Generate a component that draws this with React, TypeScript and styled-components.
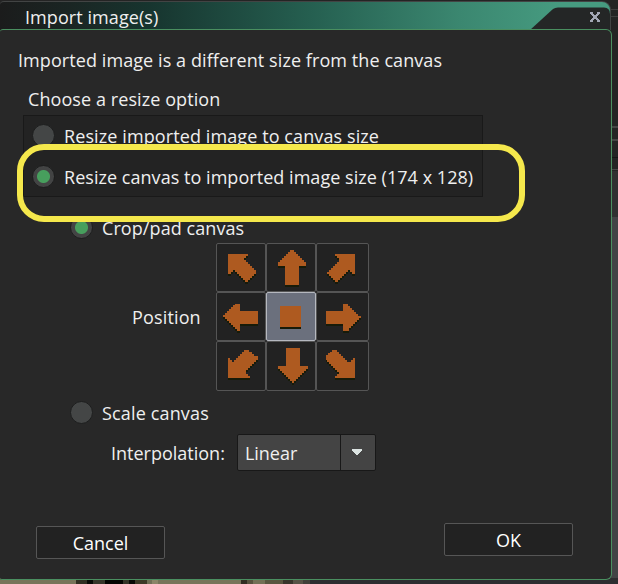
import React, { useState } from "react";
import styled, { createGlobalStyle } from "styled-components";

const GlobalStyle = createGlobalStyle`
  * { box-sizing: border-box; }
  body { margin: 0; background: #242424; overflow: hidden; }
  button { font: inherit; color: inherit; padding: 0; margin: 0; }
`;

const Screen = styled.div`
  position: relative;
  width: 618px;
  height: 584px;
  overflow: hidden;
  padding-top: 1px;
  background: #242424;
  color: #efefef;
  font: 18px/26px "Open Sans", "Noto Sans", sans-serif;
  white-space: nowrap;
`;

const Backdrop = styled.svg`
  position: absolute;
  inset: 0;
`;

const Dialog = styled.section`
  position: relative;
  width: 612px;
  height: 579px;
  display: flex;
  flex-direction: column;
`;

const TitleBar = styled.header`
  position: relative;
  flex: none;
  height: 29px;
  width: 611px;
  display: flex;
  justify-content: space-between;
  align-items: center;
  padding: 2px 10px 1px 25px;
  border: 1px solid #424444;
  border-width: 1px 1px 0 0;
  border-radius: 4px 9px 0 0;
  overflow: hidden;
  background: linear-gradient(90deg, #1b1c1c 0, #1a2523 70px, #17352f 150px, #255f50 310px, #3b8770 460px, #469b80 560px);
`;

const TitleCorner = styled.svg`
  position: absolute;
  right: 0;
  top: 0;
`;

const Title = styled.h1<{ $track: number }>`
  margin: 0;
  font: inherit;
  letter-spacing: ${(p) => p.$track}px;
`;

const CloseButton = styled.button`
  position: relative;
  width: 10px;
  height: 10px;
  border: 0;
  background: none;
  display: flex;
`;

const Body = styled.div`
  position: relative;
  flex: 1;
  margin-top: -1px;
  padding: 1px 1px 1px 0;
  border: 1px solid #4a8f60;
  border-left: 0;
  border-radius: 3px 6px 6px 2px;
  background: #282828;
  display: flex;
  flex-direction: column;
`;

const Text = styled.span<{ $track?: number }>`
  letter-spacing: ${(p) => p.$track ?? 0}px;
`;

const Message = styled.div`
  margin: 16px 0 0 18px;
`;

const Prompt = styled.div`
  margin: 13px 0 0 28px;
`;

const OptionGroup = styled.div`
  width: 460px;
  height: 82px;
  margin: 3px 0 0 23px;
  border: 1px solid #191919;
  background: #232323;
  padding: 0 0 0 8px;
  display: flex;
  flex-direction: column;
`;

const Option = styled.button<{ $height: number }>`
  flex: none;
  height: ${(p) => p.$height}px;
  border: 0;
  background: none;
  display: flex;
  align-items: center;
  gap: 9px;
  text-align: left;
`;

const Radio = styled.i<{ $on: boolean }>`
  flex: none;
  width: 23px;
  height: 23px;
  margin-top: -1px;
  border-radius: 50%;
  border: 1px solid #1d1e1e;
  background: ${(p) => (p.$on ? "radial-gradient(circle, #479f5d 0 6px, #434444 7px)" : "#444646")};
`;

const CanvasOptions = styled.div`
  display: flex;
  flex-direction: column;
  align-items: flex-start;
  padding: 16px 0 0 70px;
`;

const PositionRow = styled.div`
  display: flex;
  align-items: center;
  gap: 15px;
  margin: 1px 0 0 62px;
`;

const AnchorGrid = styled.div`
  display: grid;
  grid-template-columns: 50px 50px 53px;
  grid-template-rows: 49px 49px 50px;
`;

const AnchorCell = styled.button<{ $on: boolean }>`
  border: 1px solid ${(p) => (p.$on ? "#b5b8bf" : "#555")};
  border-radius: 2px;
  background: ${(p) => (p.$on ? "#6b707d" : "#222")};
  overflow: hidden;
  display: flex;
  svg { flex: none; margin: -1px 0 0 0; }
`;

const InterpolationRow = styled.div`
  display: flex;
  align-items: center;
  gap: 12px;
  margin: 0 0 0 41px;
`;

const Select = styled.button`
  width: 139px;
  height: 37px;
  border: 1px solid #181818;
  border-radius: 2px;
  background: #444;
  display: flex;
  align-items: stretch;
  text-align: left;
`;

const SelectValue = styled.span`
  flex: 1;
  display: flex;
  align-items: center;
  padding: 1px 0 0 7px;
`;

const SelectArrow = styled.span`
  width: 35px;
  border-left: 1px solid #181818;
  display: grid;
  place-items: center;
  padding: 0 2px 1px 0;
`;

const Footer = styled.footer`
  margin-top: auto;
  display: flex;
  justify-content: space-between;
  align-items: flex-start;
  padding: 0 37px 19px 36px;
`;

const ActionButton = styled.button<{ $drop?: number }>`
  width: 129px;
  height: 33px;
  margin-top: ${(p) => p.$drop ?? 0}px;
  border: 1px solid #565656;
  border-radius: 2px;
  background: #222;
  color: #fff;
`;

const Highlight = styled.div`
  position: absolute;
  left: 17px;
  top: 144px;
  width: 508px;
  height: 78px;
  border: 6px solid #f5e84c;
  border-radius: 27px;
  pointer-events: none;
`;

const anchors = [
  "34,34 94,34 94,40 88,40 88,46 82,46 82,52 88,52 88,58 94,58 94,64 100,64 100,70 106,70 106,76 112,76 112,82 118,82 118,92 112,92 112,98 106,98 106,104 100,104 100,110 94,110 94,118 84,118 84,112 78,112 78,106 72,106 72,100 66,100 66,94 60,94 60,88 54,88 54,82 48,82 48,88 42,88 42,94 34,94",
  "70,26 70,20 82,20 82,26 88,26 88,32 94,32 94,38 100,38 100,44 106,44 106,50 112,50 112,56 118,56 118,70 96,70 96,127 54,127 54,70 34,70 34,56 40,56 40,50 46,50 46,44 52,44 52,38 58,38 58,32 64,32 64,26",
  "54,34 115,34 115,94 106,94 106,88 100,88 100,82 94,82 94,88 88,88 88,94 82,94 82,100 76,100 76,106 70,106 70,112 64,112 64,118 54,118 54,112 48,112 48,106 42,106 42,100 36,100 36,94 30,94 30,86 36,86 36,80 42,80 42,74 48,74 48,68 54,68 54,62 60,62 60,56 66,56 66,46 60,46 60,40 54,40",
  "18,70 24,70 24,64 30,64 30,58 36,58 36,52 42,52 42,46 48,46 48,40 54,40 54,36 70,36 70,58 124,58 124,96 70,96 70,117 60,117 60,111 54,111 54,105 48,105 48,99 42,99 42,93 36,93 36,87 30,87 30,81 24,81 24,76 18,76",
  "40,42 103,42 103,104 40,104",
  "26,58 78,58 78,36 92,36 92,42 98,42 98,48 104,48 104,54 110,54 110,60 116,60 116,66 122,66 122,72 131,72 131,78 125,78 125,84 119,84 119,90 113,90 113,96 107,96 107,102 101,102 101,108 95,108 95,117 78,117 78,96 26,96",
  "34,50 40,50 40,56 46,56 46,62 52,62 52,56 58,56 58,50 64,50 64,44 70,44 70,38 76,38 76,32 82,32 82,26 96,26 96,32 106,32 106,38 112,38 112,44 122,44 122,56 116,56 116,62 110,62 110,68 104,68 104,74 98,74 98,80 92,80 92,86 86,86 86,98 92,98 92,104 98,104 98,112 34,112",
  "58,20 98,20 98,76 122,76 122,84 116,84 116,90 110,90 110,96 104,96 104,102 98,102 98,108 92,108 92,114 86,114 86,120 80,120 80,127 74,127 74,120 68,120 68,114 62,114 62,108 56,108 56,102 50,102 50,96 44,96 44,90 38,90 38,84 34,84 34,76 58,76",
  "28,42 34,42 34,36 40,36 40,32 46,32 46,26 60,26 60,32 66,32 66,38 72,38 72,44 78,44 78,50 84,50 84,56 90,56 90,62 102,62 102,56 108,56 108,50 115,50 115,112 54,112 54,106 60,106 60,100 66,100 66,92 60,92 60,86 54,86 54,80 48,80 48,74 42,74 42,68 36,68 36,62 30,62 30,56 28,56",
];

const AnchorIcon = ({ points }: { points: string }) => (
  <svg width="50" height="49" viewBox="0 0 150 147" shapeRendering="crispEdges">
    <polygon points={points} transform="translate(0 6)" fill="#171b09" />
    <polygon points={points} fill="#ae5a20" />
  </svg>
);

const floor: [number, number, string][] = [
  [0, 76, "#77745a"], [76, 11, "#302f22"], [87, 6, "#080a06"], [93, 12, "#36362a"],
  [105, 18, "#040502"], [123, 6, "#343427"], [129, 6, "#080a06"], [135, 12, "#3c3a27"],
  [147, 5, "#706f56"], [152, 6, "#8a8568"], [158, 83, "#77745a"], [241, 6, "#302d21"],
  [247, 6, "#57523e"], [253, 12, "#737056"], [265, 18, "#595640"], [283, 10, "#38352b"],
  [293, 10, "#575346"], [303, 7, "#414039"], [310, 308, "#2d2d30"],
];

export default function App() {
  const [mode, setMode] = useState("canvas");
  const [fit, setFit] = useState("crop");
  const [anchor, setAnchor] = useState(4);
  return (
    <Screen>
      <GlobalStyle />
      <Backdrop width="618" height="584" shapeRendering="crispEdges">
        <path d="M611 9h7M611 16h7" stroke="#3e3e3e" />
        <path d="M611 127h7M611 140h7" stroke="#444" strokeWidth="2" />
        <path d="M611 157h7" stroke="#151515" />
        <path d="M611 169.500h7" stroke="#484848" />
        <path d="M611 171h7v46h-7z" fill="#303030" />
        <path d="M605 217h13v367h-13z" fill="#424345" />
        {floor.map(([x, w, fill]) => (
          <rect key={x} x={x} y="578" width={w} height="6" fill={fill} />
        ))}
      </Backdrop>
      <Dialog>
        <TitleBar>
          <TitleCorner width="80" height="28" viewBox="0 0 80 28">
            <path d="M0 28 23 7Q25 5.500 28 5.500H74Q80 5.500 80 12V28Z" fill="#242626" />
          </TitleCorner>
          <Title $track={0.07}>Import image(s)</Title>
          <CloseButton aria-label="Close">
            <svg width="10" height="10" viewBox="0 0 10 10" shapeRendering="crispEdges">
              <path d="M0 0h3v2h1v1h2V2h1V0h3v2H9v1H8v1H7v2h1v1h1v1h1v2H7V8H6V7H4v1H3v2H0V8h1V7h1V6h1V4H2V3H1V2H0z" fill="#a2a7b5" />
            </svg>
          </CloseButton>
        </TitleBar>
        <Body>
          <Message><Text $track={0.08}>Imported image is a different size from the canvas</Text></Message>
          <Prompt><Text $track={0.08}>Choose a resize option</Text></Prompt>
          <OptionGroup>
            <Option $height={40} onClick={() => setMode("image")}>
              <Radio $on={mode === "image"} /><Text $track={0.1}>Resize imported image to canvas size</Text>
            </Option>
            <Option $height={42} onClick={() => setMode("canvas")}>
              <Radio $on={mode === "canvas"} /><Text $track={0.04}>Resize canvas to imported image size (174 x 128)</Text>
            </Option>
          </OptionGroup>
          <CanvasOptions>
            <Option $height={29} onClick={() => setFit("crop")}>
              <Radio $on={fit === "crop"} /><Text $track={0.08}>Crop/pad canvas</Text>
            </Option>
            <PositionRow>
              <Text $track={0.15}>Position</Text>
              <AnchorGrid>
                {anchors.map((points, i) => (
                  <AnchorCell key={i} $on={anchor === i} onClick={() => setAnchor(i)}>
                    <AnchorIcon points={points} />
                  </AnchorCell>
                ))}
              </AnchorGrid>
            </PositionRow>
            <Option $height={43} onClick={() => setFit("scale")}>
              <Radio $on={fit === "scale"} /><Text $track={0.15}>Scale canvas</Text>
            </Option>
            <InterpolationRow>
              <Text>Interpolation:</Text>
              <Select>
                <SelectValue>Linear</SelectValue>
                <SelectArrow>
                  <svg width="10" height="7" viewBox="0 0 10 7" shapeRendering="crispEdges">
                    <path d="M0 0h10v2H9v1H8v1H7v1H6v1H4V5H3V4H2V3H1V2H0z" fill="#dce4e2" />
                  </svg>
                </SelectArrow>
              </Select>
            </InterpolationRow>
          </CanvasOptions>
          <Footer>
            <ActionButton $drop={3}>Cancel</ActionButton>
            <ActionButton>OK</ActionButton>
          </Footer>
        </Body>
      </Dialog>
      <Highlight />
    </Screen>
  );
}
